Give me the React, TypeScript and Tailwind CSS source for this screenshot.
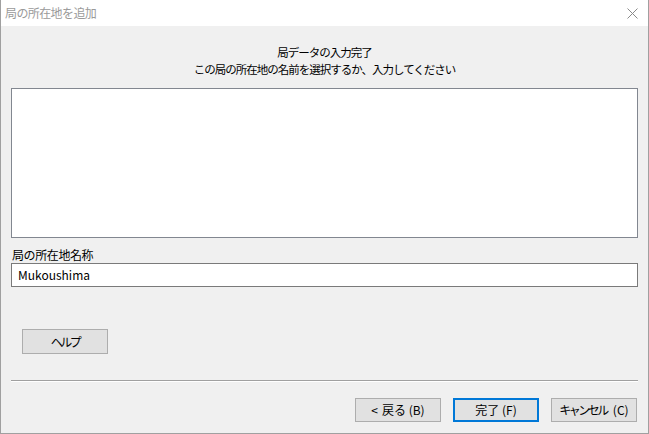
import React from "react";

const font = { fontFamily: '"Noto Sans CJK JP", "Noto Sans", sans-serif' };

function Btn({ children, primary, className = "" }: { children: React.ReactNode; primary?: boolean; className?: string }) {
  return (
    <div
      className={
        "w-[86px] h-[24px] flex items-center justify-center text-[12px] text-black bg-[#e1e1e1] " +
        (primary ? "border-2 border-[#0078d7] " : "border border-[#adadad] ") +
        className
      }
    >
      {children}
    </div>
  );
}

export default function App() {
  return (
    <div
      className="w-[649px] h-[434px] bg-[#f0f0f0] border-x border-b border-[#a0a0a0] flex flex-col overflow-hidden"
      style={font}
    >
      <div className="h-[26px] bg-white flex items-center justify-between pl-[4px] pr-[10px] shrink-0">
        <span className="text-[12px] text-[#9a9a9a] leading-none tracking-[-0.6px]">局の所在地を追加</span>
        <svg width="11" height="11" viewBox="0 0 11 11">
          <path d="M0.5 0.5 L10.5 10.5 M10.5 0.5 L0.5 10.5" stroke="#8a8a8a" strokeWidth="1" />
        </svg>
      </div>
      <div className="mt-[18px] flex flex-col items-center text-[11.5px] leading-[17px] text-black tracking-[-1px]">
        <div>局データの入力完了</div>
        <div>この局の所在地の名前を選択するか、入力してください</div>
      </div>
      <div className="ml-[10px] mt-[10px] w-[627px] h-[150px] bg-white border border-[#828790]" />
      <div className="ml-[11px] mt-[8px] text-[12px] leading-[17px] text-black tracking-[-0.4px]">局の所在地名称</div>
      <div className="ml-[10px] w-[627px] h-[24px] bg-white border border-[#7a7a7a] flex items-center pl-[6px] text-[12px] text-black">
        Mukoushima
      </div>
      <Btn className="ml-[21px] mt-[42px] h-[25px]">
        <span className="tracking-[-2.5px]">ヘルプ</span>
      </Btn>
      <div className="ml-[10px] mt-[26px] w-[627px] h-[2px] border-t border-[#a0a0a0] border-b border-b-white" />
      <div className="mt-[16px] flex justify-end gap-[12px] pr-[11px]">
        <Btn>
          <span>&lt;</span>
          <span className="ml-[4px]">戻る (B)</span>
        </Btn>
        <Btn primary>完了 (F)</Btn>
        <Btn>
          <span className="tracking-[-2.5px]">キャンセル</span>
          <span className="ml-[6px]">(C)</span>
        </Btn>
      </div>
    </div>
  );
}
